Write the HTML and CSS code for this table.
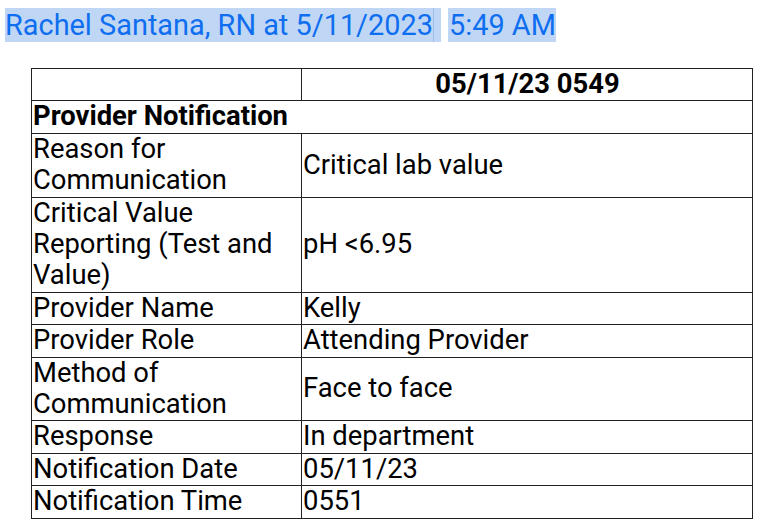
FILE: index.html
```html
<!DOCTYPE html>
<html>
<head>
<meta charset="utf-8">
<link rel="stylesheet" href="styles.css">
</head>
<body>
<div class="hdr"><span class="sel sel-a">Rachel Santana, RN at 5/11/2023</span><span class="sel sel-b">5:49 AM</span></div>
<table class="grid">
  <tr><td class="lab"></td><td class="val head">05/11/23 0549</td></tr>
  <tr><td colspan="2" class="sect">Provider Notification</td></tr>
  <tr><td class="lab">Reason for Communication</td><td class="val">Critical lab value</td></tr>
  <tr><td class="lab">Critical Value Reporting (Test and Value)</td><td class="val">pH &lt;6.95</td></tr>
  <tr><td class="lab">Provider Name</td><td class="val">Kelly</td></tr>
  <tr><td class="lab">Provider Role</td><td class="val">Attending Provider</td></tr>
  <tr><td class="lab">Method of Communication</td><td class="val">Face to face</td></tr>
  <tr><td class="lab">Response</td><td class="val">In department</td></tr>
  <tr><td class="lab">Notification Date</td><td class="val">05/11/23</td></tr>
  <tr><td class="lab">Notification Time</td><td class="val">0551</td></tr>
</table>
</body>
</html>
```
FILE: styles.css
```css
html, body {
  margin: 0;
  padding: 0;
  background: #ffffff;
  font-family: Roboto, "Liberation Sans", sans-serif;
  color: #000;
}
.hdr {
  padding: 8px 0 0 5px;
  font-size: 28.9px;
  line-height: 34px;
  color: #0f6ef0;
  white-space: nowrap;
  display: flex;
}
.sel {
  background: #bfd7f5;
  display: inline-block;
}
.sel-a {
  padding: 0 8px 0 0;
  box-shadow: inset -7px 0 0 #bfd7f5, inset -8px 0 0 #9cc0ee;
}
.sel-b {
  margin-left: 7px;
  padding: 0 0 0 1px;
}
.grid {
  border-collapse: collapse;
  margin: 26px 0 0 31px;
  width: 722px;
  font-size: 27.4px;
  line-height: 31.4px;
}
.grid td {
  border: 1px solid #222;
  padding: 0 0 0 1px;
  vertical-align: middle;
}
.lab {
  width: 268px;
}
.head {
  font-weight: 700;
  text-align: center;
}
.sect {
  font-weight: 700;
}
```
